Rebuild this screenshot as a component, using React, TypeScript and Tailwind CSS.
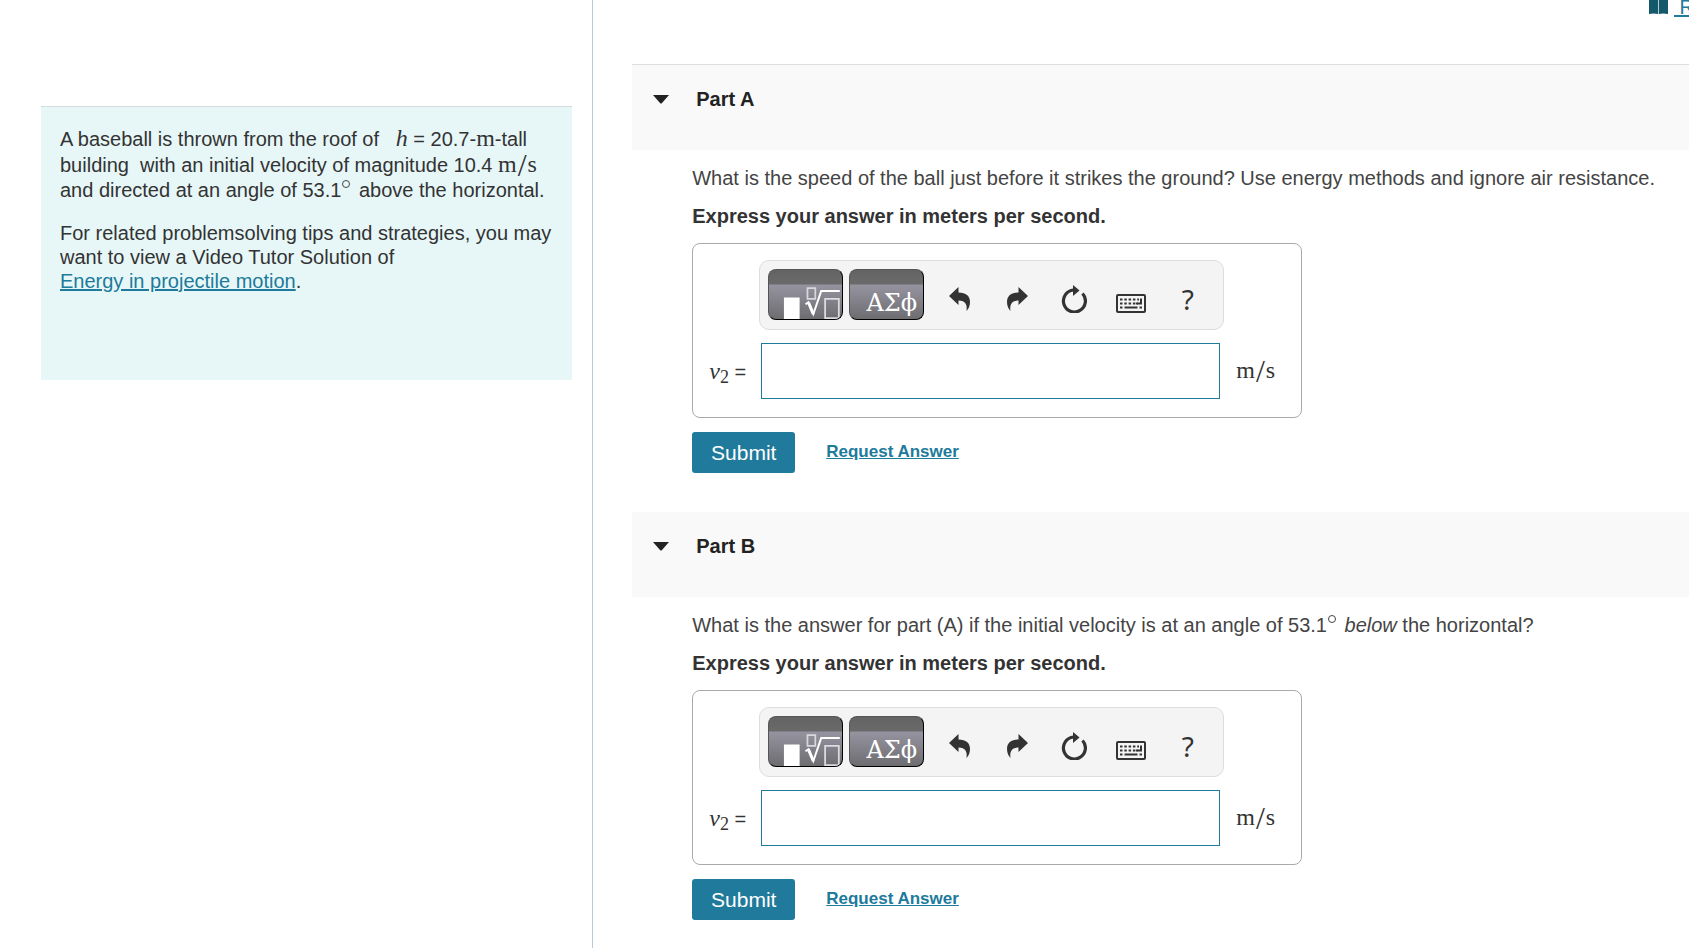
import React, { useState } from "react"

const sans = "font-['Liberation_Sans',Arial,sans-serif]"
const serif = "font-['Liberation_Serif','Times_New_Roman',serif]"

const Unit: React.FC = () => (
  <span className={`${serif} text-2xl leading-6 text-[#333]`}>
    m<span className="mx-px align-[-4px] text-[32px] leading-4">/</span>s
  </span>
)

const Degree: React.FC = () => (
  <svg viewBox="0 0 10 10" className="mr-0.5 inline-block size-2.5 -translate-y-2" aria-label="degrees">
    <circle cx="5" cy="5" r="3.500" fill="none" stroke="#444" />
  </svg>
)

const BookIcon: React.FC = () => (
  <svg viewBox="0 0 20 20" className="size-5" fill="#14586c">
    <path d="M1 1Q6 0 10 1V19Q6 18 1 19ZM11 1Q15 0 20 1V19Q15 18 11 19Z" />
    <path d="M10 1H11V19H10Z" fill="#b5ccd3" />
  </svg>
)

const TemplatesIcon: React.FC = () => (
  <svg viewBox="0 0 74 50" className="h-full w-full" fill="none" stroke="#fff">
    <path d="M15 28H31V50H15Z" fill="#fff" stroke="none" />
    <path d="M39 18.500H47V29.500H39Z" stroke="#d8d8dc" strokeWidth="1.800" />
    <path d="M37 35L40 33L45 45L53 21.500H72" strokeWidth="2" />
    <path d="M40 33L45 45" strokeWidth="3" />
    <path d="M57 29.500H71V49H57Z" stroke="#dcdce0" strokeWidth="1.800" />
  </svg>
)

const UndoIcon: React.FC = () => (
  <svg viewBox="0 0 22 24" className="h-6 w-[22px]" fill="#333">
    <path d="M0 9L9.500 0V5.500C17 5.500 21 9 21 15C21 19 19.500 22 17.500 24C18.500 18 16.500 13.500 9.500 13.500V18Z" />
  </svg>
)

const RedoIcon: React.FC = () => (
  <svg viewBox="0 0 22 24" className="h-6 w-[22px]" fill="#333">
    <path d="M22 9L12.500 0V5.500C5 5.500 1 9 1 15C1 19 2.500 22 4.500 24C3.500 18 5.500 13.500 12.500 13.500V18Z" />
  </svg>
)

const ResetIcon: React.FC = () => (
  <svg viewBox="0 0 26 28" className="h-7 w-[26px]">
    <path d="M21.500 8.500A11 11 0 1 1 12.500 5" fill="none" stroke="#333" strokeWidth="3.200" />
    <path d="M12 0L18.500 5.500L12 11Z" fill="#333" />
  </svg>
)

const KeyboardIcon: React.FC = () => (
  <svg viewBox="0 0 30 19" className="mt-2 h-[19px] w-[30px]" fill="none" stroke="#333" strokeWidth="2">
    <rect x="1" y="1" width="28" height="17" rx="1" />
    <path d="M4 5.500H23M4 9.500H22M4 13.500H7M23.500 13.500H26" strokeDasharray="2.500 1.800" />
    <path d="M8.500 13.500H21.500M20 9.500H25V4.500" />
  </svg>
)

const tools = [
  { name: "Undo", icon: <UndoIcon /> },
  { name: "Redo", icon: <RedoIcon /> },
  { name: "Reset", icon: <ResetIcon /> },
  { name: "Keyboard shortcuts", icon: <KeyboardIcon /> },
]

const paletteButton =
  "h-[51px] w-[75px] overflow-hidden rounded-lg border border-t-[#555] border-r-black border-b-black border-l-[#555] bg-[linear-gradient(#636363_0px,#6a6a6a_14px,#9693a0_15px,#6d6d70_100%)]"

const Toolbar: React.FC = () => (
  <div className="flex h-[70px] w-[465px] items-start rounded-[10px] border border-[#ddd] bg-[#f4f4f4] pt-2 pl-2">
    <button type="button" aria-label="Templates" className={paletteButton}>
      <TemplatesIcon />
    </button>
    <button
      type="button"
      aria-label="Symbols"
      className={`${paletteButton} ml-1.5 pt-4 pl-2.5 font-['DejaVu_Serif',serif] text-2xl leading-8 text-white`}
    >
      ΑΣϕ
    </button>
    <div className="flex h-[60px] items-center pl-[7px]">
      {tools.map((tool) => (
        <button key={tool.name} type="button" aria-label={tool.name} className="flex w-[57px] justify-center">
          {tool.icon}
        </button>
      ))}
      <button
        type="button"
        aria-label="Help"
        className="w-[57px] font-['Noto_Sans',sans-serif] text-[28px] leading-7 text-[#333]"
      >
        ?
      </button>
    </div>
  </div>
)

type PartProps = {
  id: string
  title: string
  children: React.ReactNode
}

const Part: React.FC<PartProps> = ({ id, title, children }) => {
  const [answer, setAnswer] = useState("")

  return (
    <section>
      <h2 className="flex h-[85px] items-start bg-[#f9f9f9] pt-[22px] pl-[21px]">
        <button type="button" className="flex items-center gap-[27px] text-xl leading-6 font-bold text-[#222]">
          <svg viewBox="0 0 16 9" className="h-[9px] w-4" fill="#222">
            <path d="M0 0H16L9 8Q8 9 7 8Z" />
          </svg>
          {title}
        </button>
      </h2>

      <div className="pt-4 pb-[39px] pl-[60px]">
        <p className="text-xl leading-6 whitespace-nowrap text-[#444]">{children}</p>
        <p className="mt-3.5 text-xl leading-6 font-bold text-[#333]">
          Express your answer in meters per second.
        </p>

        <div className="mt-[15px] h-[175px] w-[610px] rounded-lg border border-[#aaa] pt-4">
          <div className="ml-[66px]">
            <Toolbar />
          </div>
          <div className="mt-[13px] flex items-center">
            <label htmlFor={id} className="w-[68px] pl-4 text-xl leading-6 whitespace-nowrap text-[#333]">
              <i className={`${serif} text-2xl leading-6`}>v</i>
              <sub className={`${serif} text-lg leading-4`}>2</sub> =
            </label>
            <input
              id={id}
              type="text"
              value={answer}
              onChange={(e) => setAnswer(e.target.value)}
              className="h-14 w-[459px] border border-[#207a9b] bg-white px-3 text-xl"
            />
            <span className="ml-4">
              <Unit />
            </span>
          </div>
        </div>

        <div className="mt-3.5 flex items-start gap-[31px]">
          <button
            type="button"
            className="h-[41px] w-[103px] rounded-[3px] bg-[#207a9b] text-[21px] leading-6 text-white"
          >
            Submit
          </button>
          <a href="#request" className="mt-2 text-[17px] leading-6 font-bold text-[#207a9b] underline">
            Request Answer
          </a>
        </div>
      </div>
    </section>
  )
}

export default function App() {
  return (
    <div className={`${sans} grid min-h-screen grid-cols-[27fr_50fr] overflow-hidden bg-white`}>
      <aside className="pt-[106px] pr-5 pl-[41px]">
        <div className="h-[274px] border-t border-[#d5dcdd] bg-[#e7f7f8] pt-[19px] pl-[19px] text-xl text-[#333]">
          <p className="leading-[25px] whitespace-nowrap">
            A baseball is thrown from the roof of &nbsp;{" "}
            <i className={`${serif} text-2xl leading-6`}>h</i> = 20.7-
            <span className={`${serif} text-2xl leading-6`}>m</span>-tall
            <br />
            building &nbsp;with an initial velocity of magnitude 10.4 <Unit />
            <br />
            and directed at an angle of 53.1
            <Degree /> above the horizontal.
          </p>
          <p className="mt-[18px] leading-6 whitespace-nowrap">
            For related problemsolving tips and strategies, you may
            <br />
            want to view a Video Tutor Solution of
            <br />
            <a href="#tutor" className="text-[#207a9b] underline">
              Energy in projectile motion
            </a>
            .
          </p>
        </div>
      </aside>

      <main className="min-w-0 border-l border-[#b8cbdc]">
        <div className="flex h-16 justify-end gap-1.5 overflow-hidden">
          <div className="-mt-[5px]">
            <BookIcon />
          </div>
          <a
            href="#review"
            className="-mt-[5px] h-6 w-[15px] overflow-hidden text-xl leading-6 whitespace-pre text-[#207a9b] underline"
          >
            {" R"}
          </a>
        </div>
        <div className="ml-[39px] border-t border-[#ddd]">
          <Part id="answer-a" title="Part A">
            What is the speed of the ball just before it strikes the ground? Use energy methods and ignore air resistance.
          </Part>
          <Part id="answer-b" title="Part B">
            What is the answer for part (A) if the initial velocity is at an angle of 53.1
            <Degree /> <em>below</em> the horizontal?
          </Part>
        </div>
      </main>
    </div>
  )
}
